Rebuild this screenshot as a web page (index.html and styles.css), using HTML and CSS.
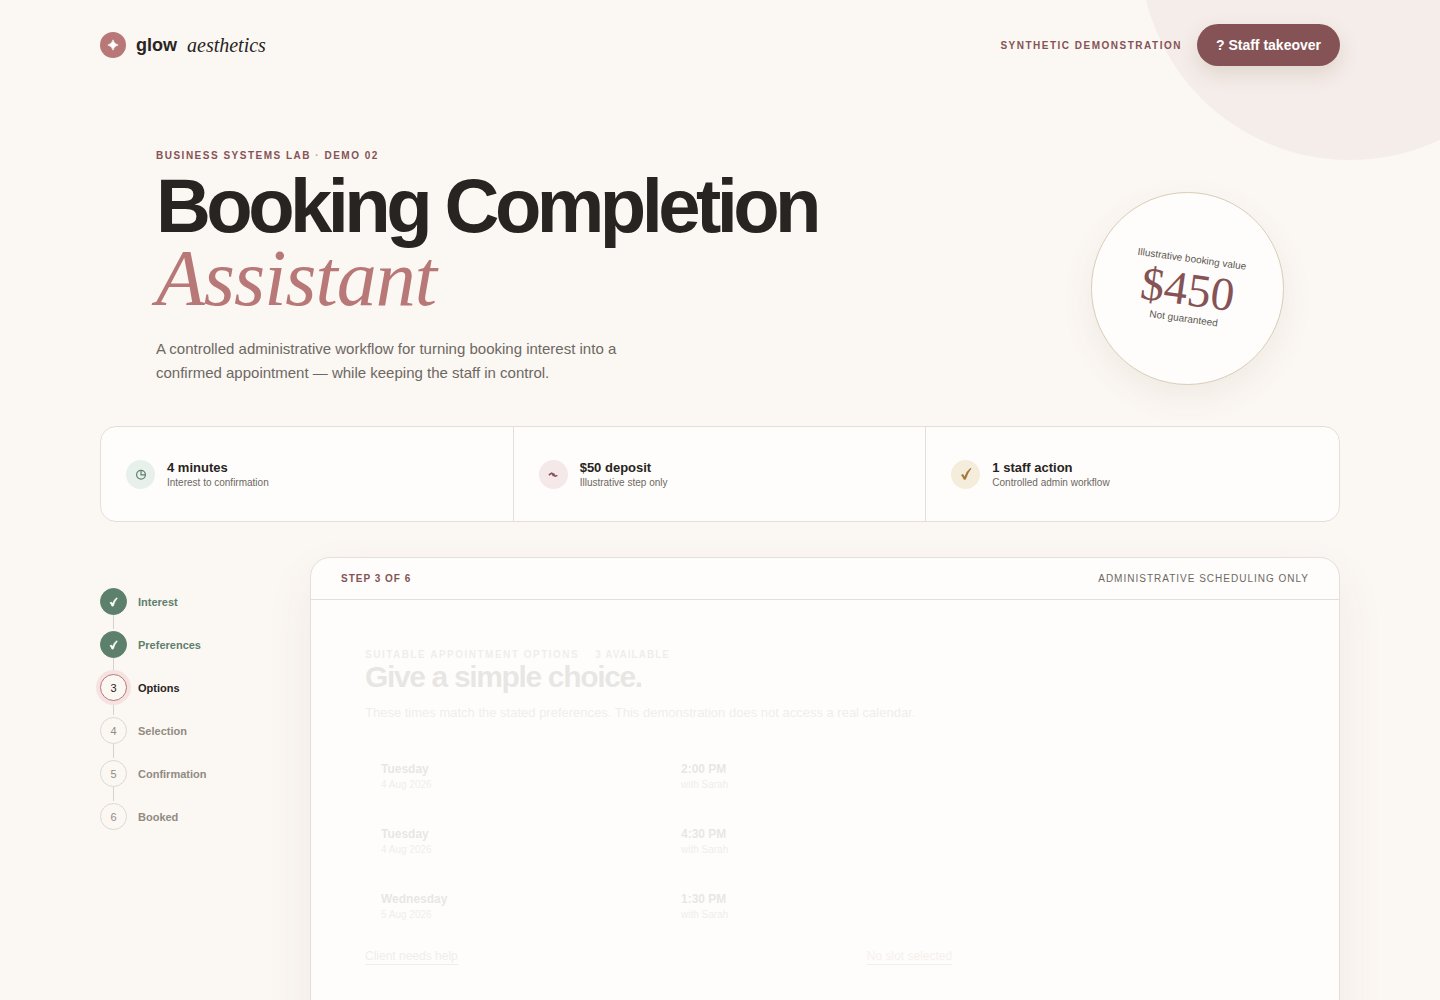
FILE: index.html
```html
<!DOCTYPE html>
<html lang="en">
<head>
<meta charset="utf-8">
<meta name="viewport" content="width=device-width, initial-scale=1">
<title>Booking Completion Assistant</title>
<link rel="stylesheet" href="styles.css">
</head>
<body>
<div class="page">
  <header class="topbar">
    <a class="brand" href="#">
      <span class="brand-mark">
        <svg viewBox="0 0 12 12" width="12" height="12" aria-hidden="true"><path d="M6 .8Q7 5 11.2 6Q7 7 6 11.2Q5 7 .8 6Q5 5 6 .8Z" fill="currentColor" stroke="currentColor" stroke-width=".6"/></svg>
      </span>
      <strong>glow</strong>
      <em>aesthetics</em>
    </a>
    <div class="topbar-side">
      <span class="label">Synthetic demonstration</span>
      <button class="takeover" type="button">? Staff takeover</button>
    </div>
  </header>

  <section class="hero">
    <div class="hero-copy">
      <p class="label eyebrow">Business systems lab <i>·</i> Demo 02</p>
      <h1>Booking Completion <em>Assistant</em></h1>
      <p class="lead">A controlled administrative workflow for turning booking interest into a confirmed appointment — while keeping the staff in control.</p>
    </div>
    <div class="value">
      <div class="value-text">
        <span>Illustrative booking value</span>
        <strong>$450</strong>
        <span>Not guaranteed</span>
      </div>
    </div>
  </section>

  <section class="stats">
    <div class="stat">
      <span class="stat-icon green">
        <svg viewBox="0 0 12 12" width="12" height="12" fill="none" stroke="currentColor" stroke-width="1.2" aria-hidden="true"><circle cx="6" cy="6.8" r="4.4"/><path d="M6 2.4v4.4h4.4"/></svg>
      </span>
      <div class="stat-text"><strong>4 minutes</strong><small>Interest to confirmation</small></div>
    </div>
    <div class="stat">
      <span class="stat-icon rose">
        <svg viewBox="0 0 12 12" width="12" height="12" fill="none" stroke="currentColor" stroke-width="1.5" aria-hidden="true"><path d="M1.8 7L5 5L6.4 8L6.4 5.4L8 8.4L10.4 7.4" stroke-linejoin="bevel"/></svg>
      </span>
      <div class="stat-text"><strong>$50 deposit</strong><small>Illustrative step only</small></div>
    </div>
    <div class="stat">
      <span class="stat-icon gold">
        <svg viewBox="0 0 12 14" width="12" height="14" aria-hidden="true"><path d="M1 8L3 7L4.6 9.4Q6.4 4 10.4 1L11.4 1.4Q7.8 5.6 5.8 12.6L3.8 12.8Q2.8 10 1 8Z" fill="currentColor"/></svg>
      </span>
      <div class="stat-text"><strong>1 staff action</strong><small>Controlled admin workflow</small></div>
    </div>
  </section>

  <main class="workspace">
    <ol class="steps">
      <li class="done"><span class="dot"><svg viewBox="0 0 12 14" width="9" height="10" aria-hidden="true"><path d="M1 8L3 7L4.6 9.2Q6.4 4 10.4 1L11.4 1.6Q7.6 5.6 5.8 12.6L3.8 12.8Q2.8 10 1 8Z" fill="currentColor" stroke="currentColor" stroke-width=".8"/></svg></span>Interest</li>
      <li class="done"><span class="dot"><svg viewBox="0 0 12 14" width="9" height="10" aria-hidden="true"><path d="M1 8L3 7L4.6 9.2Q6.4 4 10.4 1L11.4 1.6Q7.6 5.6 5.8 12.6L3.8 12.8Q2.8 10 1 8Z" fill="currentColor" stroke="currentColor" stroke-width=".8"/></svg></span>Preferences</li>
      <li class="current"><span class="dot">3</span>Options</li>
      <li><span class="dot">4</span>Selection</li>
      <li><span class="dot">5</span>Confirmation</li>
      <li><span class="dot">6</span>Booked</li>
    </ol>

    <section class="panel">
      <div class="panel-head">
        <strong>Step 3 of 6</strong>
        <span>Administrative scheduling only</span>
      </div>
      <div class="panel-body">
        <p class="options-label"><span>Suitable appointment options</span><span class="count">3 available</span></p>
        <h2>Give a simple choice.</h2>
        <p class="intro">These times match the stated preferences. This demonstration does not access a real calendar.</p>
        <ul class="slots">
          <li><div><strong>Tuesday</strong><small>4 Aug 2026</small></div><div><strong>2:00 PM</strong><small>with Sarah</small></div></li>
          <li><div><strong>Tuesday</strong><small>4 Aug 2026</small></div><div><strong>4:30 PM</strong><small>with Sarah</small></div></li>
          <li><div><strong>Wednesday</strong><small>5 Aug 2026</small></div><div><strong>1:30 PM</strong><small>with Sarah</small></div></li>
        </ul>
        <div class="actions">
          <button type="button">Client needs help</button>
          <button type="button" class="muted">No slot selected</button>
        </div>
      </div>
    </section>
  </main>
</div>
</body>
</html>
```
FILE: styles.css
```css
:root {
  --bg: #fbf7f3;
  --surface: #fefdfb;
  --ink: #282421;
  --muted: #6d6862;
  --rose: #b87878;
  --wine: #855355;
  --green: #5d806d;
  --line: #e4dfdb;
  --serif: Georgia, "Liberation Serif", serif;
}

* { box-sizing: border-box; }

body {
  margin: 0;
  background: var(--bg);
  color: var(--ink);
  font-family: "Liberation Sans", Arial, sans-serif;
}

h1, h2, p, ul, ol { margin: 0; padding: 0; }
ul, ol { list-style: none; }
button { font-family: inherit; cursor: pointer; }

.page {
  position: relative;
  overflow: hidden;
  padding: 24px 100px 40px;
}

/* large tinted disc behind the top right corner */
.page::before {
  content: "";
  position: absolute;
  top: -260px;
  right: -120px;
  width: 420px;
  height: 420px;
  border-radius: 50%;
  background: #f5edea;
}

.topbar {
  position: relative;
  display: flex;
  justify-content: space-between;
  align-items: center;
}

.brand {
  display: flex;
  align-items: center;
  gap: 10px;
  color: inherit;
  text-decoration: none;
  font-size: 18px;
}
.brand em { font-family: var(--serif); font-size: 20px; }
.brand-mark {
  display: grid;
  place-items: center;
  width: 26px;
  height: 26px;
  border-radius: 50%;
  background: var(--rose);
  color: #fff;
}

.topbar-side { display: flex; align-items: center; gap: 15px; }

.label {
  color: var(--wine);
  font-size: 10px;
  font-weight: 700;
  letter-spacing: .15em;
  text-transform: uppercase;
}

.takeover {
  height: 42px;
  padding: 0 19px;
  border: 0;
  border-radius: 21px;
  background: var(--wine);
  color: #fff;
  font-size: 14px;
  font-weight: 700;
  box-shadow: 0 8px 20px rgba(110, 80, 40, .15);
}

.hero {
  display: flex;
  justify-content: space-between;
  align-items: flex-end;
  padding: 84px 56px 41px;
}
.eyebrow { line-height: 12px; }
.eyebrow i { color: #c2a878; font-style: normal; }

h1 {
  margin-top: 8px;
  font-size: 76px;
  line-height: 72px;
  letter-spacing: -.06em;
}
h1 em {
  display: block;
  color: var(--rose);
  font-family: var(--serif);
  font-size: 80px;
  font-weight: 400;
  letter-spacing: -1px;
}
.lead {
  max-width: 500px;
  margin-top: 23px;
  color: var(--muted);
  font-size: 15px;
  line-height: 24px;
}

.value {
  display: grid;
  place-items: center;
  width: 193px;
  height: 193px;
  border: 1px solid #d9cdb8;
  border-radius: 50%;
  background: var(--surface);
  box-shadow: 0 12px 32px rgba(110, 90, 50, .08);
}
.value-text {
  display: grid;
  justify-items: center;
  transform: rotate(8deg);
  color: #5c5752;
  font-size: 10px;
  line-height: 12px;
}
.value-text strong {
  color: var(--wine);
  font-family: var(--serif);
  font-size: 47px;
  font-weight: 400;
  line-height: 48px;
}

.stats {
  display: grid;
  grid-template-columns: repeat(3, 1fr);
  border: 1px solid var(--line);
  border-radius: 16px;
  background: var(--surface);
}
.stat {
  display: flex;
  align-items: center;
  gap: 12px;
  height: 94px;
  padding: 0 25px;
}
.stat:not(:last-child) { border-right: 1px solid var(--line); }
.stat-text { padding-top: 2px; }
.stat strong { display: block; font-size: 13px; line-height: 16px; }
.stat small { display: block; color: var(--muted); font-size: 10px; line-height: 14px; }
.stat-icon {
  display: grid;
  place-items: center;
  width: 29px;
  height: 29px;
  border-radius: 50%;
}
.green { background: #e8f0eb; color: var(--green); }
.rose { background: #f5e8e8; color: var(--wine); }
.gold { background: #f5eddb; color: #a5793f; }

.workspace {
  display: grid;
  grid-template-columns: 180px 1fr;
  gap: 30px;
  align-items: start;
  margin-top: 35px;
}

.steps { padding-top: 31px; }
.steps li {
  position: relative;
  display: flex;
  align-items: center;
  gap: 11px;
  height: 27px;
  margin-bottom: 16px;
  color: #918b83;
  font-size: 11px;
  font-weight: 700;
}
/* connector to the next step */
.steps li:not(:last-child)::after {
  content: "";
  position: absolute;
  top: 27px;
  left: 13px;
  width: 1px;
  height: 14px;
  background: #d6d1cc;
}
.dot {
  position: relative;
  z-index: 1;
  display: grid;
  place-items: center;
  width: 27px;
  height: 27px;
  border: 1px solid #dcd7d1;
  border-radius: 50%;
  background: var(--bg);
  font-weight: 400;
}
.steps .done { color: var(--green); }
.done .dot { border-color: var(--green); background: var(--green); color: #fff; }
.steps .current { color: var(--ink); }
.current .dot { border-color: var(--rose); box-shadow: 0 0 0 4px #f5e3e2; }

.panel {
  border: 1px solid var(--line);
  border-radius: 20px;
  background: var(--surface);
  box-shadow: 0 20px 50px rgba(100, 70, 60, .07);
}
.panel-head {
  display: flex;
  justify-content: space-between;
  align-items: center;
  height: 42px;
  padding: 0 30px;
  border-bottom: 1px solid var(--line);
  font-size: 10px;
  letter-spacing: .1em;
  text-transform: uppercase;
}
.panel-head strong { color: var(--wine); }
.panel-head span { color: var(--muted); }

.panel-body { padding: 48px 54px 54px; opacity: .1; }
.options-label {
  display: flex;
  gap: 16px;
  font-size: 10px;
  font-weight: 700;
  line-height: 14px;
  letter-spacing: .15em;
  text-transform: uppercase;
  color: var(--muted);
}
.options-label .count { letter-spacing: .1em; }
h2 { font-size: 30px; line-height: 30px; letter-spacing: -.045em; }
.intro { margin-top: 11px; color: var(--muted); font-size: 13px; line-height: 20px; }

.slots { display: grid; gap: 9px; margin-top: 26px; }
.slots li {
  display: grid;
  grid-template-columns: repeat(3, 1fr);
  gap: 12px;
  align-items: center;
  height: 56px;
  padding: 0 16px;
}
.slots strong { display: block; font-size: 12px; line-height: 16px; }
.slots small { display: block; color: var(--muted); font-size: 10px; line-height: 16px; }

.actions {
  display: grid;
  grid-template-columns: 6fr 5fr;
  justify-items: start;
  margin-top: 13px;
  padding-bottom: 60px;
}
.actions button {
  padding: 0;
  border: 0;
  border-bottom: 1px solid currentColor;
  background: none;
  color: var(--muted);
  font-size: 12px;
  line-height: 16px;
}
.actions .muted { color: var(--rose); }
```
